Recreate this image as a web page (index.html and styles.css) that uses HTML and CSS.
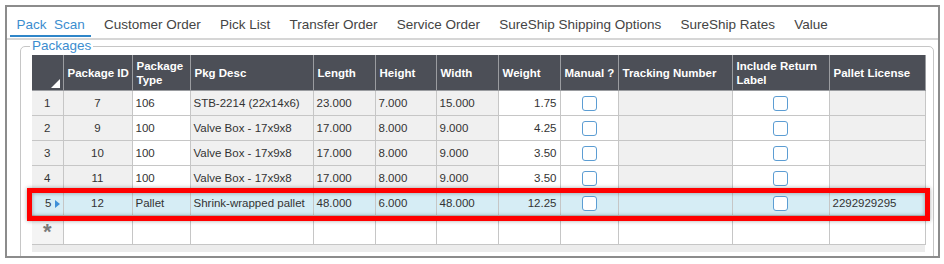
FILE: index.html
```html
<!DOCTYPE html>
<html lang="en">
<head>
  <meta charset="UTF-8">
  <title>Pack Scan - Packages</title>
  <link rel="stylesheet" href="styles.css">
</head>
<body>
  <div class="frame">
    <div class="tabs">
      <span class="tab active">Pack&nbsp; Scan</span>
      <span class="tab">Customer Order</span>
      <span class="tab">Pick List</span>
      <span class="tab">Transfer Order</span>
      <span class="tab">Service Order</span>
      <span class="tab">SureShip Shipping Options</span>
      <span class="tab">SureShip Rates</span>
      <span class="tab">Value</span>
    </div>

    <fieldset class="packages">
      <legend>Packages</legend>
      <div class="grid">
        <table>
          <colgroup>
            <col style="width:31px">
            <col style="width:69px">
            <col style="width:58px">
            <col style="width:123px">
            <col style="width:62px">
            <col style="width:61px">
            <col style="width:62px">
            <col style="width:62px">
            <col style="width:58px">
            <col style="width:114px">
            <col style="width:97px">
            <col style="width:96px">
          </colgroup>
          <thead>
            <tr>
              <th class="corner"><span class="sort-glyph"></span></th>
              <th class="nowrap">Package ID</th>
              <th>Package Type</th>
              <th>Pkg Desc</th>
              <th>Length</th>
              <th>Height</th>
              <th>Width</th>
              <th>Weight</th>
              <th class="nowrap">Manual ?</th>
              <th class="nowrap">Tracking Number</th>
              <th>Include Return Label</th>
              <th class="nowrap">Pallet License</th>
            </tr>
          </thead>
          <tbody>
            <tr>
              <td class="row-head">1</td>
              <td class="ro center">7</td>
              <td>106</td>
              <td class="ro">STB-2214 (22x14x6)</td>
              <td class="ro">23.000</td>
              <td class="ro">7.000</td>
              <td class="ro">15.000</td>
              <td class="right">1.75</td>
              <td class="center"><span class="check"></span></td>
              <td class="ro"></td>
              <td class="center"><span class="check"></span></td>
              <td class="ro"></td>
            </tr>
            <tr>
              <td class="row-head">2</td>
              <td class="ro center">9</td>
              <td>100</td>
              <td class="ro">Valve Box - 17x9x8</td>
              <td class="ro">17.000</td>
              <td class="ro">8.000</td>
              <td class="ro">9.000</td>
              <td class="right">4.25</td>
              <td class="center"><span class="check"></span></td>
              <td class="ro"></td>
              <td class="center"><span class="check"></span></td>
              <td class="ro"></td>
            </tr>
            <tr>
              <td class="row-head">3</td>
              <td class="ro center">10</td>
              <td>100</td>
              <td class="ro">Valve Box - 17x9x8</td>
              <td class="ro">17.000</td>
              <td class="ro">8.000</td>
              <td class="ro">9.000</td>
              <td class="right">3.50</td>
              <td class="center"><span class="check"></span></td>
              <td class="ro"></td>
              <td class="center"><span class="check"></span></td>
              <td class="ro"></td>
            </tr>
            <tr>
              <td class="row-head">4</td>
              <td class="ro center">11</td>
              <td>100</td>
              <td class="ro">Valve Box - 17x9x8</td>
              <td class="ro">17.000</td>
              <td class="ro">8.000</td>
              <td class="ro">9.000</td>
              <td class="right">3.50</td>
              <td class="center"><span class="check"></span></td>
              <td class="ro"></td>
              <td class="center"><span class="check"></span></td>
              <td class="ro"></td>
            </tr>
            <tr class="selected">
              <td class="row-head current">5<span class="row-arrow"></span></td>
              <td class="center">12</td>
              <td>Pallet</td>
              <td>Shrink-wrapped pallet</td>
              <td>48.000</td>
              <td>6.000</td>
              <td>48.000</td>
              <td class="right">12.25</td>
              <td class="center"><span class="check"></span></td>
              <td></td>
              <td class="center"><span class="check"></span></td>
              <td>2292929295</td>
            </tr>
            <tr class="new-row">
              <td class="row-head star">*</td>
              <td></td><td></td><td></td><td></td><td></td>
              <td></td><td></td><td></td><td></td><td></td><td></td>
            </tr>
          </tbody>
        </table>
        <div class="highlight"></div>
      </div>
    </fieldset>
  </div>
</body>
</html>
```

FILE: styles.css
```css
body {
  margin: 0;
  background: #fff;
  font-family: "Liberation Sans", Arial, sans-serif;
  color: #333;
}

.frame {
  box-sizing: border-box;
  width: 935px;
  height: 253px;
  margin: 5px 0 0 5px;
  border: 2px solid #8c8c8c;
  background: #fff;
  overflow: hidden;
}

/* tab strip */
.tabs {
  display: flex;
  border-bottom: 2px solid #d6d6d6;
  padding-bottom: 1px;
}

.tab {
  position: relative;
  padding: 10px 9.6px 4px;
  font-size: 13.5px;
  line-height: 16px;
  color: #444;
  white-space: nowrap;
}

.tab.active {
  color: #3b8dcf;
}

.tab.active::after {
  content: "";
  position: absolute;
  left: 3px;
  right: 3px;
  bottom: 0;
  height: 2px;
  background: #2f86c9;
}

/* packages group */
.packages {
  margin: -2px 4px 0 13px;
  padding: 1px 6px 40px 11px;
  border: 1px solid #c6c6c6;
  border-radius: 5px;
  min-width: 0;
}

.packages legend {
  margin-left: -2px;
  padding: 0 2px;
  font-size: 13.5px;
  line-height: 16px;
  color: #3b8dcf;
}

.grid {
  position: relative;
  width: 893px;
  height: 197px;
  background: #ececec;
}

table {
  width: 893px;
  table-layout: fixed;
  border-collapse: collapse;
  font-size: 11.5px;
}

th {
  height: 35px;
  padding: 0 4px;
  background: #4c4f57;
  color: #fff;
  font-weight: bold;
  text-align: left;
  line-height: 14px;
  border: 1px solid #9a9ca0;
  border-top: none;
  vertical-align: middle;
}

th.nowrap {
  white-space: nowrap;
  overflow: hidden;
}

th.corner {
  position: relative;
  border-left: none;
}

.sort-glyph {
  position: absolute;
  right: 3px;
  bottom: 2px;
  width: 0;
  height: 0;
  border-left: 9px solid transparent;
  border-bottom: 9px solid #fff;
}

td {
  height: 24px;
  padding: 0 3px;
  background: #fff;
  color: #333;
  border: 1px solid #c6c6c6;
  white-space: nowrap;
  overflow: hidden;
  vertical-align: middle;
}

td.ro {
  background: #f0f0f0;
}

td.center {
  text-align: center;
}

td.right {
  text-align: right;
}

td.row-head {
  background: #f0f0f0;
  text-align: center;
  border-left: none;
}

td.row-head.current {
  text-align: right;
  padding-right: 3px;
}

.row-arrow {
  display: inline-block;
  margin-left: 3px;
  width: 0;
  height: 0;
  border-top: 4px solid transparent;
  border-bottom: 4px solid transparent;
  border-left: 5px solid #3d8fd8;
  vertical-align: -1px;
}

tr.selected td {
  background: #d6edf5;
}

tr.new-row td {
  background: #fff;
}

tr.new-row td.row-head {
  background: #f4f4f4;
}

td.star {
  padding-top: 4px;
  font-size: 22px;
  font-weight: bold;
  line-height: 20px;
  color: #7a7a7a;
}

.check {
  display: inline-block;
  box-sizing: border-box;
  width: 15px;
  height: 15px;
  border: 1.5px solid #5c9dd3;
  border-radius: 3px;
  background: #fff;
  vertical-align: middle;
}

/* red annotation around the selected row */
.highlight {
  position: absolute;
  left: -5px;
  top: 133px;
  width: 903px;
  height: 33px;
  box-sizing: border-box;
  border: 5px solid #ff0000;
  box-shadow: 0 0 4px rgba(0, 0, 0, 0.35), inset 0 0 4px rgba(0, 0, 0, 0.35);
}
```
